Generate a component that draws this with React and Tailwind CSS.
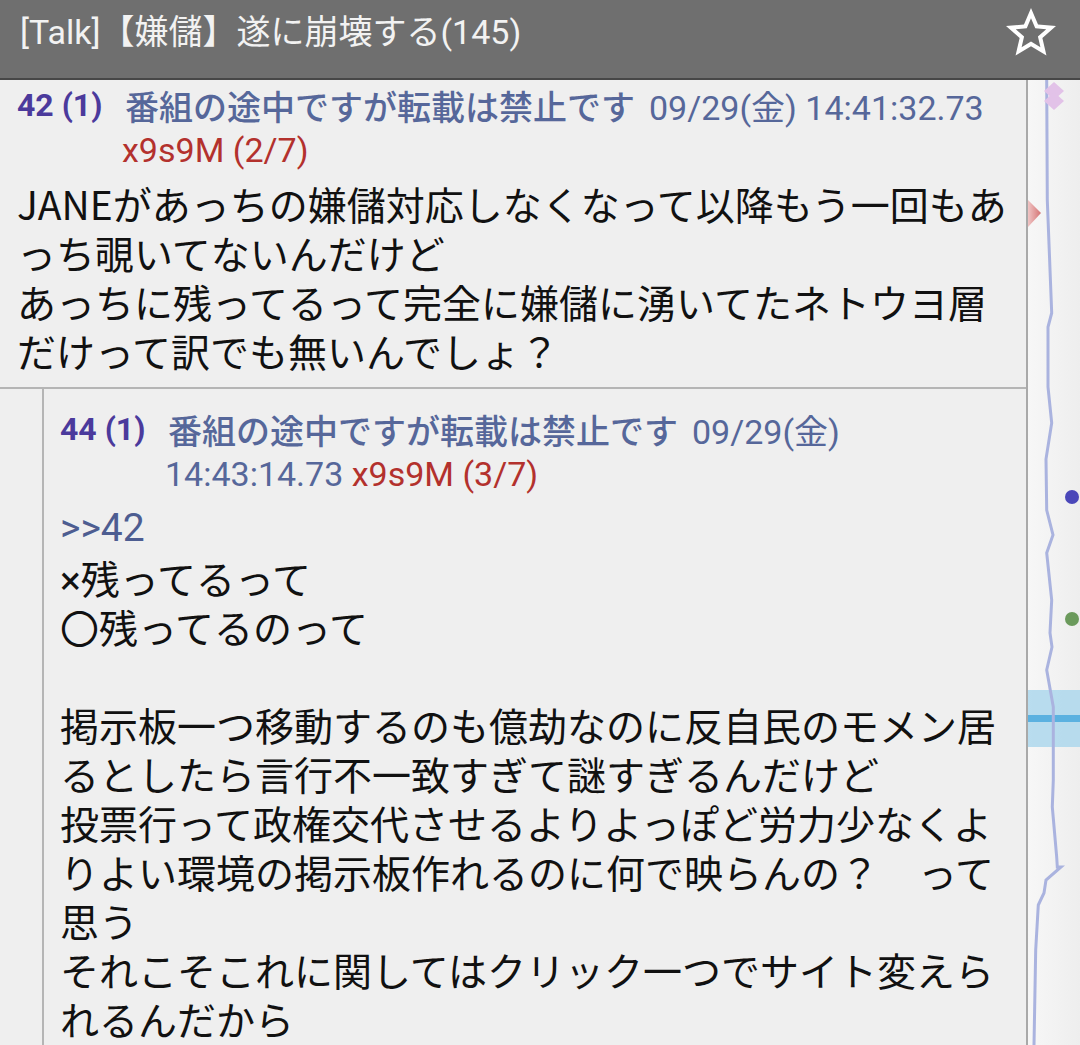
import React from 'react';

const ROBOTO = { fontFamily: 'Roboto, "Noto Sans CJK JP", sans-serif' };
const JP = { fontFamily: '"Noto Sans CJK JP", Roboto, sans-serif' };

function StarIcon() {
  return (
    <svg viewBox="0 0 24 24" className="w-[60px] h-[60px]" fill="#ffffff">
      <path d="M22 9.24l-7.19-.62L12 2 9.19 8.63 2 9.24l5.46 4.73L5.82 21 12 17.27 18.18 21l-1.63-7.03L22 9.24zM12 15.4l-3.76 2.27 1-4.28-3.32-2.88 4.38-.38L12 6.1l1.71 4.04 4.38.38-3.32 2.88 1 4.28L12 15.4z" />
    </svg>
  );
}

function PostHeader({ no, lines }) {
  return (
    <div className="flex text-[34px] leading-[45px]" style={ROBOTO}>
      <div className="w-[105px] shrink-0 h-[45px] text-[32px] font-bold text-[#4b3a9c]">
        {no}
      </div>
      <div className="flex flex-col">
        {lines.map((line, i) => (
          <div key={i} className={`whitespace-nowrap h-[45px] ${i === 0 ? 'pl-[3px]' : ''}`}>{line}</div>
        ))}
      </div>
    </div>
  );
}

const Name = () => (
  <span className="font-medium text-[#56679a] mr-[14px]" style={JP}>番組の途中ですが転載は禁止です</span>
);
const Date = ({ children }) => <span className="text-[#56679a]">{children}</span>;
const Id = ({ children }) => <span className="text-[#b3312d]">{children}</span>;

function Body({ lines, first, className }) {
  return (
    <div className={`text-[39px] leading-[49px] text-[#111111] ${className}`} style={JP}>
      {first && <div className="h-[49px] text-[#4d5d91]" style={ROBOTO}>{first}</div>}
      {lines.map((l, i) => (
        <div key={i} className="whitespace-nowrap h-[49px]">{l}</div>
      ))}
    </div>
  );
}

function ScrollMap() {
  const pts = [
    [18.7, 0], [19.3, 120], [23.7, 233], [20, 247], [20, 307], [23.7, 343], [18, 379],
    [18.7, 430], [25, 455], [18.7, 473], [23.7, 520], [22, 553], [24, 567], [18.7, 590],
    [25.3, 627], [25.3, 700], [24.3, 727], [28.7, 777], [29.3, 787], [33, 787], [18, 800],
    [16, 813], [10.3, 825], [7.7, 870], [6, 965],
  ];
  const d = pts.map((p) => p.join(',')).join(' ');
  return (
    <div className="relative flex-1 bg-gradient-to-r from-[#f7f7f7] to-[#eeeeee]">
      <div className="absolute left-0 right-0 top-[610px] h-[57px] bg-[#a9d6ec]/80 flex flex-col justify-center">
        <div className="h-[7px] bg-[#5bb1e0]" />
      </div>
      <svg className="absolute inset-0" width="52" height="965">
        <polyline points={d} fill="none" stroke="#aab3df" strokeWidth="3" />
        <polygon points="26,2 36,11 26,20 16,11" fill="#e2c2e8" />
        <polygon points="26,12 36,21 26,30 16,21" fill="#e2c2e8" />
        <defs>
          <linearGradient id="tri" x1="0" x2="1" y1="0" y2="0">
            <stop offset="0" stopColor="#f0c4c4" />
            <stop offset="1" stopColor="#d47474" />
          </linearGradient>
        </defs>
        <polygon points="0,120 13,133 0,147" fill="url(#tri)" />
        <circle cx="44" cy="417" r="7" fill="#4a47b9" />
        <circle cx="44" cy="539" r="7" fill="#6b9a5c" />
      </svg>
    </div>
  );
}

export default function App() {
  return (
    <div className="w-[1080px] h-[1045px] overflow-hidden bg-[#efefef] flex flex-col">
      <header className="h-[80px] shrink-0 bg-[#6f6f6f] border-b-2 border-[#474747] flex items-center justify-between pl-[20px] pr-[19px]">
        <h1 className="text-[34px] text-[#f2f2f2] leading-none -mt-[14px] whitespace-nowrap" style={ROBOTO}>
          [Talk]【嫌儲】遂に崩壊する(145)
        </h1>
        <div className="-mt-[12px]">
          <StarIcon />
        </div>
      </header>
      <div className="flex flex-1 min-h-0">
        <main className="w-[1028px] shrink-0 border-r-2 border-[#a9a9a9]">
          <section className="px-[17px] pt-[3px] pb-[12px] border-b-2 border-[#b5b5b5]">
            <PostHeader
              no="42 (1)"
              lines={[
                <>
                  <Name />
                  <Date>09/29(金) 14:41:32.73</Date>
                </>,
                <Id>x9s9M (2/7)</Id>,
              ]}
            />
            <Body
              className="mt-[6px]"
              lines={[
                'JANEがあっちの嫌儲対応しなくなって以降もう一回もあ',
                'っち覗いてないんだけど',
                'あっちに残ってるって完全に嫌儲に湧いてたネトウヨ層',
                'だけって訳でも無いんでしょ？',
              ]}
            />
          </section>
          <section className="ml-[42px] border-l-2 border-[#b5b5b5] pl-[16px] pt-[18px] h-full">
            <PostHeader
              no="44 (1)"
              lines={[
                <>
                  <Name />
                  <Date>09/29(金)</Date>
                </>,
                <>
                  <Date>14:43:14.73 </Date>
                  <Id>x9s9M (3/7)</Id>
                </>,
              ]}
            />
            <Body
              className="mt-[7px]"
              first=">>42"
              lines={[
                <>
                  <span style={ROBOTO}>×</span>残ってるって
                </>,
                '〇残ってるのって',
                '',
                '掲示板一つ移動するのも億劫なのに反自民のモメン居',
                'るとしたら言行不一致すぎて謎すぎるんだけど',
                '投票行って政権交代させるよりよっぽど労力少なくよ',
                'りよい環境の掲示板作れるのに何で映らんの？　って',
                '思う',
                'それこそこれに関してはクリック一つでサイト変えら',
                'れるんだから',
              ]}
            />
          </section>
        </main>
        <ScrollMap />
      </div>
    </div>
  );
}
